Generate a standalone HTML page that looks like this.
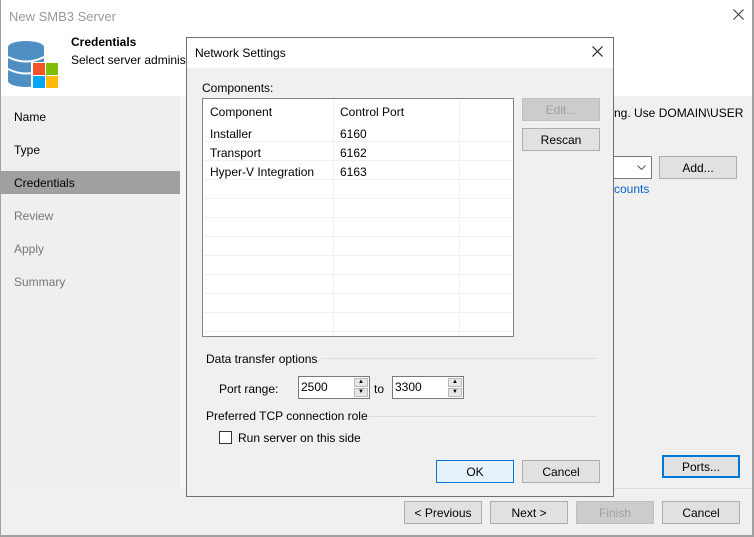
<!DOCTYPE html>
<html><head><style>
*{margin:0;padding:0;box-sizing:border-box}
body{width:754px;height:537px;overflow:hidden;background:#f0f0f0;font-family:"Segoe UI","Liberation Sans",sans-serif;font-size:12px;color:#000;position:relative}
.a{position:absolute;white-space:nowrap}
.t{margin-top:1px}
.btn{position:absolute;background:#e1e1e1;border:1px solid #adadad;text-align:center;line-height:22px;height:23px;width:78px}
.dis{color:#a0a0a0;background:#cccccc;border-color:#bfbfbf}
.row{position:absolute;left:1px;width:309px;height:19px;border-bottom:1px solid #f0f0f0}
.spin{position:absolute;width:72px;height:23px;background:#fff;border:1px solid #7a7a7a}
.spin span{position:absolute;left:2px;top:3px}
.sb{position:absolute;right:1px;width:14px;height:9px;background:#e6e6e6;border:1px solid #bbb;font-size:6px;line-height:7px;text-align:center}
</style></head><body>
<div class="a" style="left:0;top:0;width:754px;height:96px;background:#fff"></div>
<div class="a" style="left:0;top:0;width:1px;height:537px;background:#a0a0a0"></div>
<div class="a" style="left:752px;top:0;width:2px;height:537px;background:#a0a0a0"></div>
<div class="a" style="left:0;top:535px;width:754px;height:2px;background:#a0a0a0"></div>
<div class="a" style="left:9px;top:9px;color:#999;font-size:13px">New SMB3 Server</div>
<svg class="a" style="left:733px;top:9px" width="11" height="11"><path d="M0.5 0.5L10.5 10.5M10.5 0.5L0.5 10.5" stroke="#444" stroke-width="1.2"/></svg>
<svg class="a" style="left:7px;top:40px" width="54" height="50">
<ellipse cx="19" cy="7" rx="18" ry="6" fill="#4f8fc4"/>
<rect x="1" y="7" width="36" height="34" fill="#4f8fc4"/>
<ellipse cx="19" cy="41" rx="18" ry="6" fill="#4f8fc4"/>
<path d="M1 17q18 9 36 0M1 29q18 9 36 0" stroke="#fff" stroke-width="2" fill="none"/>
<rect x="24" y="22" width="28" height="27" fill="#fff"/>
<rect x="26" y="23" width="12" height="12" fill="#f35325"/><rect x="39" y="23" width="12" height="12" fill="#81bc06"/>
<rect x="26" y="36" width="12" height="12" fill="#05a6f0"/><rect x="39" y="36" width="12" height="12" fill="#ffba08"/>
</svg>
<div class="a" style="left:71px;top:35px;font-weight:bold">Credentials</div>
<div class="a" style="left:71px;top:53px">Select server administ</div>
<div class="a" style="left:1px;top:96px;width:179px;height:392px;background:#efefef"></div>
<div class="a" style="left:180px;top:96px;width:6px;height:392px;background:#f6f6f6"></div>
<div class="a" style="left:1px;top:171px;width:179px;height:23px;background:#a0a0a0"></div>
<div class="a" style="left:14px;top:110px">Name</div>
<div class="a" style="left:14px;top:143px">Type</div>
<div class="a" style="left:14px;top:176px">Credentials</div>
<div class="a" style="left:14px;top:209px;color:#777">Review</div>
<div class="a" style="left:14px;top:242px;color:#777">Apply</div>
<div class="a" style="left:14px;top:275px;color:#777">Summary</div>
<div class="a" style="left:614px;top:106px">ng. Use DOMAIN\USER</div>
<div class="a" style="left:613px;top:156px;width:39px;height:23px;background:#fff;border:1px solid #7a7a7a;border-left:none"></div>
<svg class="a" style="left:637px;top:165px" width="9" height="5"><path d="M0.5 0.5L4.5 4.5L8.5 0.5" stroke="#555" fill="none"/></svg>
<div class="btn" style="left:659px;top:156px">Add...</div>
<div class="a" style="left:614px;top:182px;color:#0066cc">counts</div>
<div class="btn" style="left:662px;top:455px;border:2px solid #0078d7;line-height:20px">Ports...</div>
<div class="a" style="left:186px;top:488px;width:566px;height:1px;background:#dcdcdc"></div>
<div class="btn" style="left:404px;top:501px">&lt; Previous</div>
<div class="btn" style="left:490px;top:501px">Next &gt;</div>
<div class="btn dis" style="left:576px;top:501px">Finish</div>
<div class="btn" style="left:662px;top:501px">Cancel</div>

<div class="a" style="left:186px;top:37px;width:428px;height:460px;background:#f0f0f0;border:1px solid #707070"></div>
<div class="a" style="left:187px;top:38px;width:426px;height:30px;background:#fff"></div>
<div class="a" style="left:195px;top:46px">Network Settings</div>
<svg class="a" style="left:592px;top:46px" width="11" height="11"><path d="M0.5 0.5L10.5 10.5M10.5 0.5L0.5 10.5" stroke="#222" stroke-width="1.2"/></svg>
<div class="a" style="left:202px;top:81px">Components:</div>
<div class="a" style="left:202px;top:98px;width:312px;height:239px;background:#fff;border:1px solid #828282">
<div class="a" style="left:130px;top:0;width:1px;height:237px;background:#f0f0f0"></div>
<div class="a" style="left:256px;top:0;width:1px;height:237px;background:#f0f0f0"></div>
<div class="a" style="left:7px;top:6px">Component</div><div class="a" style="left:137px;top:6px">Control Port</div>
<div class="a" style="left:7px;top:28px">Installer</div><div class="a" style="left:137px;top:28px">6160</div>
<div class="a" style="left:7px;top:47px">Transport</div><div class="a" style="left:137px;top:47px">6162</div>
<div class="a" style="left:7px;top:66px">Hyper-V Integration</div><div class="a" style="left:137px;top:66px">6163</div>
<div class="row" style="top:24px"></div><div class="row" style="top:43px"></div><div class="row" style="top:62px"></div>
<div class="row" style="top:81px"></div><div class="row" style="top:100px"></div><div class="row" style="top:119px"></div>
<div class="row" style="top:138px"></div><div class="row" style="top:157px"></div><div class="row" style="top:176px"></div>
<div class="row" style="top:195px"></div><div class="row" style="top:214px"></div>
</div>
<div class="btn dis" style="left:522px;top:98px">Edit...</div>
<div class="btn" style="left:522px;top:128px">Rescan</div>
<div class="a" style="left:206px;top:352px">Data transfer options</div>
<div class="a" style="left:321px;top:358px;width:276px;height:1px;background:#dcdcdc"></div>
<div class="a" style="left:219px;top:382px">Port range:</div>
<div class="spin" style="left:298px;top:376px"><span>2500</span><div class="sb" style="top:1px">▲</div><div class="sb" style="top:11px">▼</div></div>
<div class="a" style="left:374px;top:382px">to</div>
<div class="spin" style="left:392px;top:376px"><span>3300</span><div class="sb" style="top:1px">▲</div><div class="sb" style="top:11px">▼</div></div>
<div class="a" style="left:206px;top:409px">Preferred TCP connection role</div>
<div class="a" style="left:369px;top:416px;width:228px;height:1px;background:#dcdcdc"></div>
<div class="a" style="left:219px;top:431px;width:13px;height:13px;background:#fff;border:1px solid #333"></div>
<div class="a" style="left:238px;top:431px">Run server on this side</div>
<div class="btn" style="left:436px;top:460px;background:#e5f1fb;border-color:#0078d7">OK</div>
<div class="btn" style="left:522px;top:460px">Cancel</div>
</body></html>
